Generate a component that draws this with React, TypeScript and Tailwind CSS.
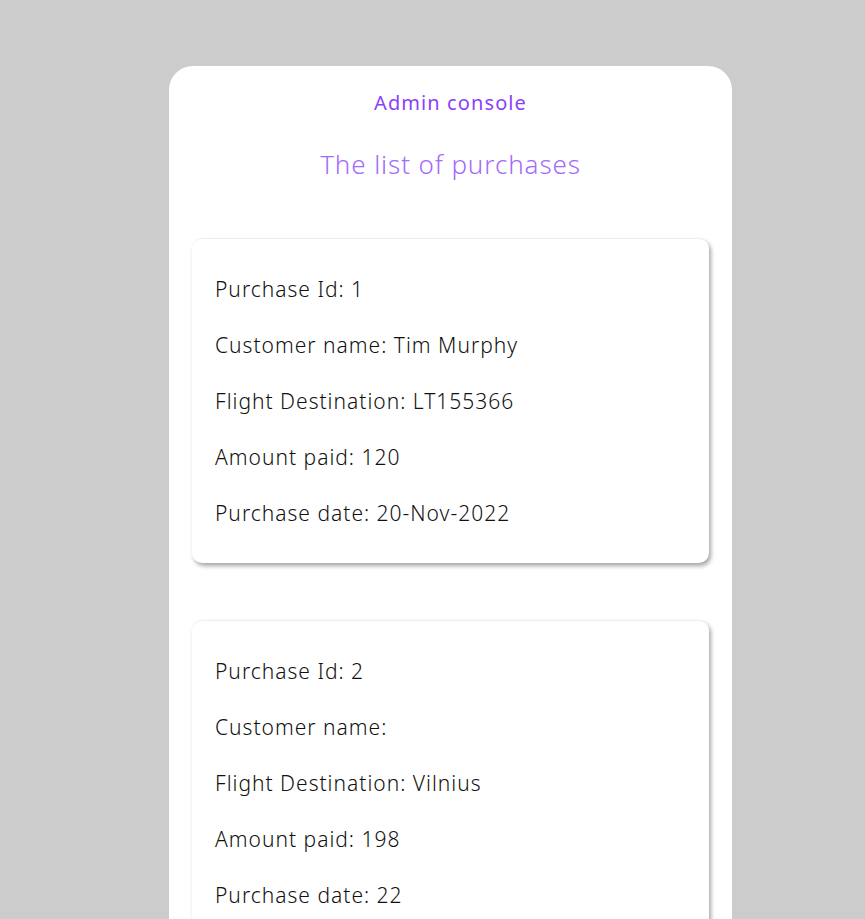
import React from "react";

const purchases = [
  [
    "Purchase Id: 1",
    "Customer name: Tim Murphy",
    "Flight Destination: LT155366",
    "Amount paid: 120",
    "Purchase date: 20-Nov-2022",
  ],
  [
    "Purchase Id: 2",
    "Customer name:",
    "Flight Destination: Vilnius",
    "Amount paid: 198",
    "Purchase date: 22",
  ],
];

export default function App() {
  return (
    <div
      className="min-h-[919px] w-full bg-[#cccccc] overflow-hidden"
      style={{ fontFamily: "'Noto Sans', Lato, sans-serif" }}
    >
      <div className="ml-[169px] mt-[66px] w-[563px] rounded-t-[24px] bg-white px-[23px] pb-10">
        <div className="flex h-[74px] items-start justify-center pt-[23px]">
          <span className="text-[20px] font-normal leading-[28px] tracking-[1.1px] text-[#8a3ffc]">Admin console</span>
        </div>
        <div className="flex h-[50px] items-start justify-center pt-[6px]">
          <span className="text-[26px] font-light leading-[36px] tracking-[0.9px] text-[#a26bfa]">The list of purchases</span>
        </div>
        <div className="mt-[48px] flex flex-col gap-[57px]">
          {purchases.map((rows, i) => (
            <div
              key={i}
              className="rounded-[10px] bg-white px-[23px] py-[22px] shadow-[2px_3px_4px_rgba(0,0,0,0.35)] border-t border-[#eeeeee]"
            >
              {rows.map((r) => (
                <div key={r} className="h-[56px] text-[21px] font-light leading-[56px] tracking-[1px] text-[#111111]">
                  {r}
                </div>
              ))}
            </div>
          ))}
        </div>
      </div>
    </div>
  );
}
